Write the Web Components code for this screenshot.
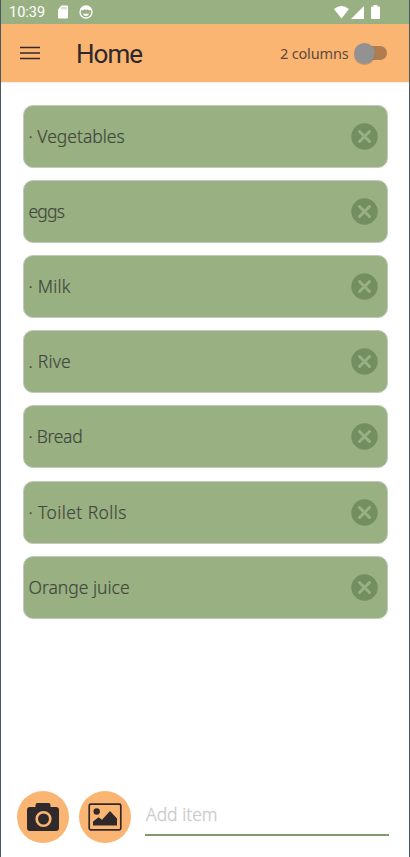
<!DOCTYPE html>
<html lang="en"><head><meta charset="utf-8"><title>Home</title>
<style>html,body{margin:0;height:100%;overflow:hidden;background:#fff}</style></head><body>
<shopping-app></shopping-app>
<script>
const define = (name, html) => customElements.define(name, class extends HTMLElement {
  constructor() {
    super();
    const t = document.createElement('template');
    t.innerHTML = html;
    this.attachShadow({mode: 'open'}).append(t.content.cloneNode(true));
  }
});

define('status-bar', `<style>
:host{display:flex;height:24px;background:#99b082;color:#fff;font:14.5px/25px Roboto,sans-serif;padding:0 29px 0 8px;align-items:center}
span{width:48px}svg{display:block}.sd{margin-right:10px}.wifi{margin-left:auto}.sig{margin-left:2px}.bat{margin-left:7px}
</style><span>10:39</span>
<svg class="sd" width="12" height="14" viewBox="0 0 12 14"><path fill="#fff" d="M4.500.5H10a1 1 0 0 1 1 1v11a1 1 0 0 1-1 1H2a1 1 0 0 1-1-1V4.500z"/><path stroke="#99b082" stroke-width=".7" d="M5 2v2.500M7 2v2.500M9 2v2.500"/></svg>
<svg width="14" height="14" viewBox="0 0 14 14"><circle cx="7" cy="7" r="6" fill="none" stroke="#fff" stroke-width="1.300"/><path fill="#fff" d="M1.200 6.500Q1.500 1.200 7 1.200t5.800 5.300L11.500 5Q9.500 5.500 8.500 4.200 7 5.500 5.500 4.200 4.500 5.500 2.500 5zM4 8.800h6Q9.500 11 7 11T4 8.800z"/></svg>
<svg class="wifi" width="15" height="13" viewBox="0 0 15 13"><path fill="#fff" d="M0 3Q7.500-3 15 3L7.500 12.500z"/></svg>
<svg class="sig" width="13" height="13" viewBox="0 0 13 13"><path fill="#fff" d="M13 0v13H0z"/></svg>
<svg class="bat" width="9" height="14" viewBox="0 0 9 14"><path fill="#fff" d="M2.500 0h4v1.500H8a1 1 0 0 1 1 1V13a1 1 0 0 1-1 1H1a1 1 0 0 1-1-1V2.500a1 1 0 0 1 1-1h1.500z"/></svg>`);

define('toggle-switch', `<style>
:host{display:flex;align-items:center;width:33px;height:22px}
i{flex:none;width:21px;height:21px;border-radius:50%;background:#929292;box-shadow:0 1px 1px #0003;z-index:1}
b{flex:none;width:23px;height:14px;margin-left:-11px;border-radius:0 7px 7px 0;background:#b17d50}
</style><i></i><b></b>`);

define('app-header', `<style>
:host{display:flex;align-items:center;height:58px;background:#fbb572;box-sizing:border-box;padding:0 22.500px 0 19px;color:#2d282b;box-shadow:0 1px 1px #0001}
h1{margin:0 0 0 36px;padding-top:2px;font:400 26px/36px Roboto,sans-serif;letter-spacing:-1px;flex:1}
span{font:14.500px/24px "Noto Sans",sans-serif;color:#5d493d;margin-right:5px;letter-spacing:-.15px}
</style><svg width="20" height="14" viewBox="0 0 20 14"><path stroke="#33292a" stroke-width="1.700" d="M0 1.500h20M0 7h20M0 12.500h20"/></svg>
<h1><slot></slot></h1><span>2 columns</span><toggle-switch></toggle-switch>`);

define('list-item', `<style>
:host{display:flex;align-items:center;justify-content:space-between;box-sizing:border-box;height:63px;border:1px solid #c3c8bd;border-radius:10px;background:#99b082;color:#42483c;font:300 17.500px/28px "Noto Sans",sans-serif;padding:0 9px 0 4.500px;letter-spacing:var(--track,0);-webkit-text-stroke:.2px}
svg{flex:none}
span{padding-bottom:1px}
</style><span><slot></slot></span>
<svg width="27" height="27" viewBox="0 0 27 27"><circle cx="13.500" cy="13.500" r="13.200" fill="#738f62"/><path d="m8.500 8.500 10 10m0-10-10 10" stroke="#99b082" stroke-width="3" stroke-linecap="round"/></svg>`);

define('round-button', `<style>:host{display:grid;place-items:center;width:52px;height:52px;border-radius:50%;background:#fbb572}</style><slot></slot>`);

define('entry-bar', `<style>
:host{display:flex;padding:0 20px 13.500px 16px;height:53px}
round-button{margin-right:10px}
.field{flex:1;box-sizing:border-box;height:45px;border-bottom:2px solid #81996f;color:#cbcbcb;font:17.500px/46px "Noto Sans",sans-serif;font-weight:300;margin-left:4px;padding-left:1px;-webkit-text-stroke:.3px}
svg{display:block}
</style>
<round-button><svg width="34" height="30" viewBox="0 0 34 30"><path fill="#30292b" d="M4 5h5.500V3q0-2 2-2h11q2 0 2 2v2H30q3 0 3 3v18q0 3-3 3H4q-3 0-3-3V8q0-3 3-3z"/><circle cx="17.500" cy="17" r="6.800" fill="#30292b" stroke="#fbb572" stroke-width="2.600"/></svg></round-button>
<round-button><svg width="34" height="28" viewBox="0 0 34 28"><rect x="1.200" y="1.200" width="31.600" height="25.600" rx="1.500" fill="none" stroke="#30292b" stroke-width="1.700"/><circle cx="8.700" cy="8.500" r="3.200" fill="#30292b"/><path fill="#30292b" d="M5 22.500v-4l5.500-4.300 3.500 2.600L22 8l7 7.500v7z"/></svg></round-button>
<div class="field">Add item</div>`);

define('shopping-app', `<style>
:host{display:flex;flex-direction:column;box-sizing:border-box;height:857px;width:410px;border-left:1px solid #4c5960;border-right:1px solid #4c5960;background:#fff}
main{flex:1;display:flex;flex-direction:column;gap:12.200px;padding:22.600px 21px 0 22px}
</style><status-bar></status-bar><app-header>Home</app-header>
<main><list-item>· Vegetables</list-item><list-item style="--track:-.8px">eggs</list-item><list-item style="--track:.2px">· Milk</list-item><list-item style="--track:.2px">. Rive</list-item><list-item style="--track:-.3px">· Bread</list-item><list-item style="--track:.4px">· Toilet Rolls</list-item><list-item>Orange juice</list-item></main><entry-bar></entry-bar>`);
</script></body></html>
